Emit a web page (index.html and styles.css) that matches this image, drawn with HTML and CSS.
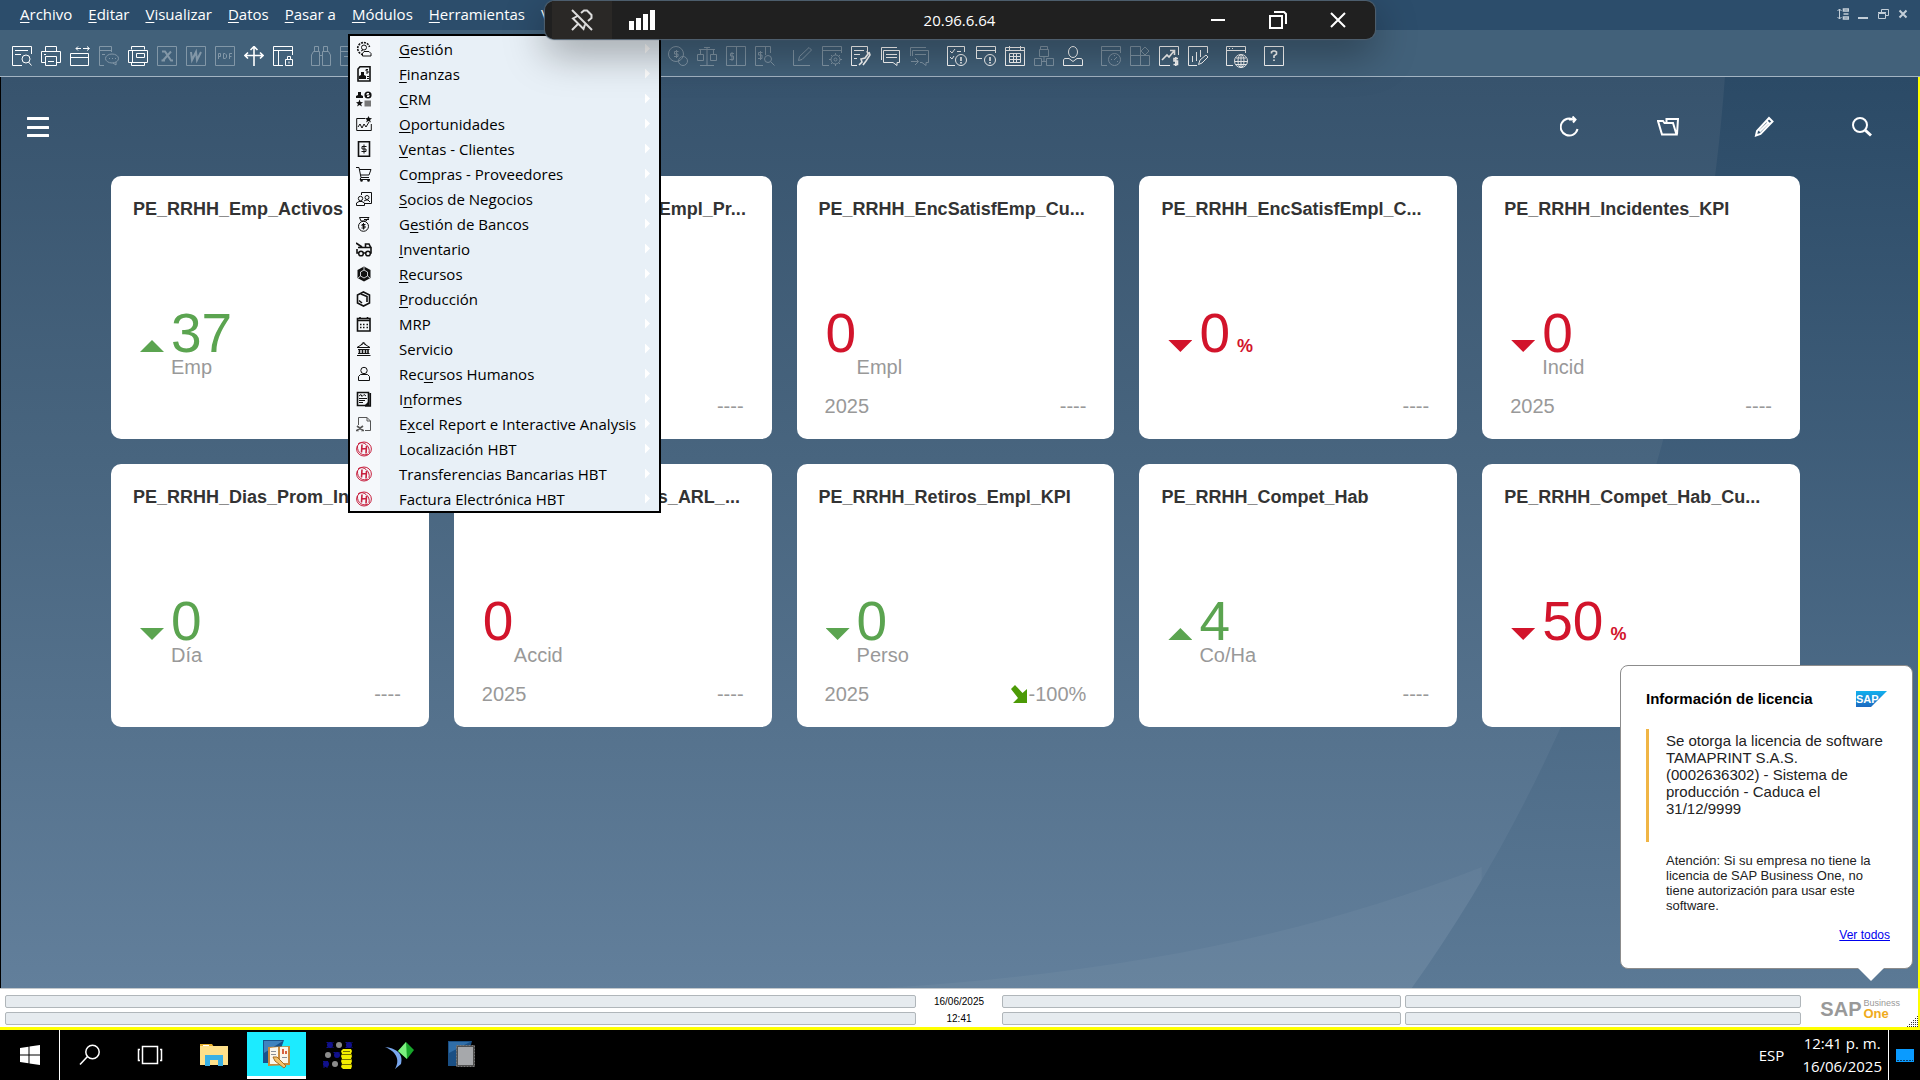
FILE: index.html
```html
<!DOCTYPE html>
<html lang="es">
<head>
<meta charset="utf-8">
<title>SAP Business One</title>
<link rel="stylesheet" href="styles.css">
</head>
<body>
<svg class="sprite" aria-hidden="true">
  <defs>
    <symbol id="t-preview" viewBox="0 0 20 20"><path d="M10 19.500H.5V.5H19.500V8M3 4.500H16M3 8.500H9"/><circle cx="14" cy="13" r="4"/><path d="M16.500 16 19.500 19.500"/></symbol>
    <symbol id="t-print" viewBox="0 0 20 20"><path d="M4.500 5.500V.5H15.500V5.500M4.500 16.500H.5V5.500H19.500V16.500H15.500M4.500 10.500H15.500V19.500H4.500ZM3 8.500H5M7 15.500H13"/></symbol>
    <symbol id="t-swap" viewBox="0 0 20 20"><path d="M.5 7.500H18.500V19.500H.5ZM1 11.500H18M6 2.500H11M13 2.500H19M8 .5 6 2.500 8 4.500M17 .5 19.500 2.500 17 4.500"/></symbol>
    <symbol id="t-msg" viewBox="0 0 20 20"><path d="M5 19.500H.5V.5H12.500V6M1 4.500H12M3 8.500H6"/><ellipse cx="13" cy="12.500" rx="6.500" ry="4.500"/><path d="M14 17 17 19V16M10 12.500H11M13 12.500H14M16 12.500H17"/></symbol>
    <symbol id="t-fax" viewBox="0 0 20 20"><path d="M3.500 3.500V.5H16.500V3.500M.5 4.500H19.500V16.500H.5ZM3.500 16V19.500H16.500V17M4.500 5V16M8.500 7.500H16.500V11.500H8.500Z"/></symbol>
    <symbol id="t-x" viewBox="0 0 20 20"><path d="M.5.5H19.500V19.500H.5Z"/><path class="thick" d="M5 5.500H8L14 14.500H16M14 5.500 6 14.500M4.500 14.500H8"/></symbol>
    <symbol id="t-w" viewBox="0 0 20 20"><path d="M.5.5H19.500V19.500H.5Z"/><path class="thick" d="M5 6 6 14 10 6 11 14 15 6"/></symbol>
    <symbol id="t-pdf" viewBox="0 0 20 20"><path d="M.5.5H19.500V19.500H.5Z"/><path d="M3.500 13V7.500H5.500V10.500H3.500M8.500 7.500H10L11.500 9V11.500L10 12.500H8.500ZM14.500 13V7.500H17M14.500 10.500H16.500"/></symbol>
    <symbol id="t-move" viewBox="0 0 20 20"><path class="mid" d="M10 1V20M1 9.500H19M6.500 4 10 .5 13.500 4M4 6.500 1 9.500 4 12.500M16 6.500 19 9.500 16 12.500"/></symbol>
    <symbol id="t-lock" viewBox="0 0 20 20"><path d="M10 19.500H.5V.5H19.500V9M1 4.500H19M5.500 5V19M12.500 13.500H19.500V19.500H12.500ZM14.500 13V10.500H17.500V13M16 15.500V17.500"/></symbol>
    <symbol id="t-find" viewBox="0 0 20 20"><path d="M3.500 5V.5H7.500V5M12.500 5V.5H16.500V5M2.500 5.500H8.500V19.500H.5V9ZM11.500 5.500H17.500L19.500 9V19.500H11.500ZM8.500 9.500H11.500"/></symbol>
    <symbol id="t-add" viewBox="0 0 20 20"><path d="M.5.5H19.500V19.500H.5ZM1 5.500H19M4 10.500H16M10 8V17"/></symbol>
    <symbol id="t-coins" viewBox="0 0 20 20"><circle cx="8" cy="8" r="7.500"/><path d="M10.500 5.500H6.500V8H10V10.500H6M8.500 4V12"/><circle cx="15" cy="15" r="4.500"/></symbol>
    <symbol id="t-scale" viewBox="0 0 20 20"><path d="M10 1V19M2 3.500H18M3 19.500H17M7 1.500H13M3.500 4V8M16.500 4V8M.5 8.500H6.500V14.500H.5ZM13.500 8.500H19.500V14.500H13.500Z"/></symbol>
    <symbol id="t-split" viewBox="0 0 20 20"><path d="M.5.5H19.500V19.500H.5ZM10.500 1V19M8 7.500H4.500V10H7.500V13.500H3.500M6 6V15"/></symbol>
    <symbol id="t-paysearch" viewBox="0 0 20 20"><path d="M8 19.500H.5V.5H15.500V7M10.500 1V9M7.500 6.500H3.500V9H7V12.500H3M5.500 5V14"/><circle cx="13" cy="13" r="3.500"/><path d="M16 16 19.500 19.500"/></symbol>
    <symbol id="t-edit" viewBox="0 0 20 20"><path d="M.5 4V19.500H17M5.500 14.500 6.500 10.500 16 1.500 18.500 4 9 13.500Z"/></symbol>
    <symbol id="t-gear" viewBox="0 0 20 20"><path d="M7 19.500H.5V.5H19.500V7M1 4.500H19"/><circle cx="13.500" cy="13.500" r="4.500"/><circle cx="13.500" cy="13.500" r="1.500"/><path d="M13.500 7V9M13.500 18V20M7 13.500H9M18 13.500H20M9 9 10.500 10.500M16.500 16.500 18 18M18 9 16.500 10.500M10.500 16.500 9 18"/></symbol>
    <symbol id="t-tool" viewBox="0 0 20 20"><path d="M6 19.500H.5V.5H16.500V5M3 4.500H13M3 8.500H9M3 12.500H6"/><path class="mid" d="M8 19 11 16 10 13 14 12 17 8 16 5M12 19 15 15 19 9 18 6"/></symbol>
    <symbol id="t-chat" viewBox="0 0 20 20"><path d="M1.500 14V1.500H17M3.500 4.500H19.500V16.500H17V19.500L13 16.500H3.500ZM6 8.500H17M6 11.500H17"/></symbol>
    <symbol id="t-reply" viewBox="0 0 20 20"><path d="M1.500 10V1.500H17M3.500 10V4.500H19.500V16.500H17V19.500L13 16.500H11M6 8.500H17M2 15.500H9M6 12 9.500 15.500 6 19"/></symbol>
    <symbol id="t-check" viewBox="0 0 20 20"><path d="M8 19.500H.5V.5H17.500V6M3 5 5 7 8 3M3 11 5 13 7 10M10 5.500H14"/><circle cx="14" cy="14" r="5.500"/><path class="mid" d="M14 11V15M14 16V17.500"/></symbol>
    <symbol id="t-alert" viewBox="0 0 20 20"><path d="M6 12.500H.5V.5H19.500V7M1 4.500H19"/><circle cx="14" cy="14" r="5.500"/><path class="mid" d="M14 11V15M14 16V17.500"/></symbol>
    <symbol id="t-cal" viewBox="0 0 20 20"><path d="M.5 1.500H19.500V19.500H.5ZM4.500 0V4M15.500 0V4M1 4.500H19M4.500 7.500H15.500V16.500H4.500ZM8.500 7V17M11.500 7V17M5 10.500H15M5 13.500H15"/></symbol>
    <symbol id="t-org" viewBox="0 0 20 20"><path d="M5.500 3.500H14.500V10.500H5.500ZM6.500 3V.5H13.500V3M10 11V15M.5 12.500H7.500V19.500H.5ZM12.500 12.500H19.500V19.500H12.500ZM8 15.500H12"/></symbol>
    <symbol id="t-user" viewBox="0 0 20 20"><ellipse cx="10" cy="6" rx="4.500" ry="5.500"/><path d="M6 12.500H1.500L.5 14V19.500H19.500V14L18.500 12.500H14L10 15.500Z"/></symbol>
    <symbol id="t-time" viewBox="0 0 20 20"><path d="M6 19.500H.5V.5H19.500V7M1 4.500H19"/><circle cx="13.500" cy="13.500" r="6"/><path d="M13 14 16 11M10 13.500H11M16 15.500H17M13.500 9V10"/></symbol>
    <symbol id="t-widgets" viewBox="0 0 20 20"><path d="M.5.5H10.500V19.500H.5ZM1 9.500H19.500V19.500H10M15 1 19 5 15 9 11 5Z"/></symbol>
    <symbol id="t-trend" viewBox="0 0 20 20"><path d="M11 19.500H.5V.5H19.500V9"/><path class="mid" d="M3 14 8 9 10 11 15 5M11 4.500H15.500V9M19 12.500H15V15H18.500V18.500H14.500M16.800 11V20"/></symbol>
    <symbol id="t-chart" viewBox="0 0 20 20"><path d="M9 19.500H.5V.5H19.500V7M4.500 16V10M8.500 15V6M12.500 11V4M10.500 18.500 12 14 18 9 20 11 14 17Z"/></symbol>
    <symbol id="t-web" viewBox="0 0 22 22"><path d="M7 19.500H.5V.5H19.500V7M1 4.500H19M3 2.500H4M6 2.500H7"/><circle cx="15" cy="15" r="6.500"/><ellipse cx="15" cy="15" rx="3" ry="6.500"/><path d="M9 15.500H21M10 12H20M10 18.500H20M15 9V21"/></symbol>
    <symbol id="t-help" viewBox="0 0 20 20"><path d="M.5.5H19.500V19.500H.5Z"/><path class="mid" d="M7.500 7.500V6L9 5H11L12.500 6V8L10 10V12M10 13.500V15"/></symbol>

    <symbol id="m-gestion" viewBox="0 0 16 16"><path class="mid" stroke-dasharray="2 1" d="M7 13.500A6 6 0 1 1 13.500 6"/><circle cx="8" cy="6.500" r="2.500"/><path d="M6.500 15V12.500L8 10.500H13L15 12.500V15ZM5 10 7 9"/></symbol>
    <symbol id="m-finanzas" viewBox="0 0 16 16"><path class="mid" d="M4 .8H14V15H2V3Z"/><path class="fill" d="M3 13V10L5 9V6H8V9L10 10V13Z"/><path d="M12 3.500H10V5H12V7H10M11 10.500H13M11 12.500H13"/></symbol>
    <symbol id="m-crm" viewBox="0 0 16 16"><path class="fill" d="M0 7V5L2 4V1H5V4L7 5V7ZM3.500 8.500 4.500 11 7 11.200 5 13 6 15.500 3.500 14 1 15.500 2 13 0 11.200 2.500 11Z"/><path fill="#777" stroke="none" d="M8.500 9.500H15V15.500H8.500Z"/><circle class="fill" cx="12" cy="4" r="3.600"/><path class="light" d="M13 2.500H11V4H13V5.500H11"/></symbol>
    <symbol id="m-opor" viewBox="0 0 16 16"><path d="M9 2.500H.7V14.500H15.300V8M2 11 4 8 6 12 8 8 10 11 13 6"/><path class="fill" d="M12.500 0 13.500 2 16 2.200 14 4 15 6.500 12.500 5 10 6.500 11 4 9 2.200 11.500 2Z"/></symbol>
    <symbol id="m-ventas" viewBox="0 0 16 16"><path class="mid" d="M2.500.8H13.500V15.200H2.500Z"/><path d="M10.500 5.500H6V8H10V10.500H5.500M8 3.500V12.500"/></symbol>
    <symbol id="m-compras" viewBox="0 0 16 16"><path d="M0 1.500H3L5 11.500H13M3.500 3.500H15L13 9H4.500M5 11.500 4 13.500H14"/><circle class="fill" cx="5.500" cy="14.500" r="1.300"/><circle class="fill" cx="12.500" cy="14.500" r="1.300"/></symbol>
    <symbol id="m-socios" viewBox="0 0 16 16"><path d="M5.500 4V1.500H15.500V12.500H9"/><circle cx="4.500" cy="7.500" r="2.200"/><circle cx="11" cy="6.500" r="2"/><path d="M.5 14.500V12L3 10.500H6L8.500 12V14.500ZM8 10 10 9H12L14 11"/></symbol>
    <symbol id="m-bancos" viewBox="0 0 16 16"><path d="M5 5 3.500 1.500H13L10 5Z"/><circle cx="7.500" cy="10.300" r="5"/><path d="M9.500 8.500H6V10H9V12H5.500M7.500 7V13.500M8 3.500H13"/></symbol>
    <symbol id="m-invent" viewBox="0 0 16 16"><path class="mid" d="M0 2 6 6M2 6.500H15V12H1V8M9.500 6V3H13L15 7"/><circle class="knob" cx="5" cy="12.500" r="2.300"/><circle class="knob" cx="12" cy="12.500" r="2.300"/></symbol>
    <symbol id="m-recursos" viewBox="0 0 16 16"><path class="fill" d="M8 .5 14.500 4V12L8 15.500 1.500 12V4Z"/><path stroke="#f5f8fb" stroke-width=".8" d="M8 4 11.500 6V10L8 12 4.500 10V6ZM8 1V4M2 12 4.500 10M14 12 11.500 10"/></symbol>
    <symbol id="m-prod" viewBox="0 0 16 16"><path class="mid" d="M7.500 1 13.500 4V12L7.500 15 1.500 12V4ZM5 3 11 5.500V11M3 9.500 6 12"/></symbol>
    <symbol id="m-mrp" viewBox="0 0 16 16"><path class="mid" d="M1.500 2.500H14V15H1.500ZM1.500 4.500H14M4 1V3M11.500 1V3"/><path class="mid" d="M4 8.500H5.500M7 8.500H8.500M10.500 8.500H12M4 11.500H5.500M7 11.500H8.500M10.500 11.500H12"/></symbol>
    <symbol id="m-serv" viewBox="0 0 16 16"><path d="M1 6.500 7.500 2.500 14 6.500ZM5 4 7.500 1 10 4M2 8.500H13.500M1 14.500H14.500M2 12.500H13.500"/><path class="mid" d="M3.500 9V12M6.500 9V12M9.500 9V12M12 9V12"/></symbol>
    <symbol id="m-rrhh" viewBox="0 0 16 16"><circle cx="8" cy="4.500" r="3.200"/><path d="M2.500 14.500V10.500L4.500 8.500H11.500L13.500 10.500V14.500Z"/></symbol>
    <symbol id="m-inf" viewBox="0 0 16 16"><path class="mid" d="M1.500 1.500H12.500V14.500H1.500ZM14.300 2V15H9"/><path d="M3 5 5 3.500 6 5.500 8 3.500 10 5M3 7.500H11M3 9.500H9M3 11.500H7"/><path class="fill" d="M13 10V15H8Z"/></symbol>
    <symbol id="m-excel" viewBox="0 0 16 16"><path d="M2.500 9V1.500H11L14.500 5V14.500H9M11 1.500V5H14.500"/><path class="mid" d="M1 10 7 14.500M7 10 1 14.500M0 14.500H3M5 14.500H8"/></symbol>
    <symbol id="m-hbt" viewBox="0 0 16 16"><ellipse cx="8" cy="8" rx="7.400" ry="7"/><path d="M2 3C5-1 15 4 13 12M1.500 5C1 12 7 15.500 12 13"/><path class="mid" d="M6 3.500 5.500 11.500M5.500 8 10.500 7.500M10.500 5 10 12.500"/></symbol>
  </defs>
</svg>

<div class="desktop">
  <header class="menubar">
    <nav class="menus">
      <button><u>A</u>rchivo</button><button><u>E</u>ditar</button><button><u>V</u>isualizar</button><button><u>D</u>atos</button><button><u>P</u>asar a</button><button><u>M</u>ódulos</button><button><u>H</u>erramientas</button><button>Ventana</button>
    </nav>
    <div class="winctl">
      <button aria-label="Ordenar"><svg width="12" height="12" viewBox="0 0 12 12"><path d="M2.500 1V11M.5 3 2.500 1 4.500 3M.5 9 2.500 11 4.500 9"/><path class="mid" d="M6.500 1H11.500V3H6.500ZM6.500 6H11.500M6.500 9H11.500V11H6.500Z"/></svg></button>
      <button aria-label="Minimizar"><svg width="12" height="12" viewBox="0 0 12 12"><path class="thick" d="M1 10H11"/></svg></button>
      <button aria-label="Restaurar"><svg width="12" height="12" viewBox="0 0 12 12"><path d="M1.500 5.500H8.500V10.500H1.500ZM4.500 4V1.500H11.500V7.500H9M1 4.500H9"/></svg></button>
      <button aria-label="Cerrar"><svg width="12" height="12" viewBox="0 0 12 12"><path class="thick" d="M2.500 2.500 9.500 9.500M9.500 2.500 2.500 9.500"/></svg></button>
    </div>
  </header>

  <div class="toolbar" role="toolbar">
    <div class="group">
      <button aria-label="Vista previa"><svg><use href="#t-preview"/></svg></button>
      <button aria-label="Imprimir"><svg><use href="#t-print"/></svg></button>
      <button aria-label="Intercambiar"><svg><use href="#t-swap"/></svg></button>
      <button disabled aria-label="SMS"><svg><use href="#t-msg"/></svg></button>
      <button aria-label="Fax"><svg><use href="#t-fax"/></svg></button>
      <button disabled aria-label="Exportar a Excel"><svg><use href="#t-x"/></svg></button>
      <button disabled aria-label="Exportar a Word"><svg><use href="#t-w"/></svg></button>
      <button disabled aria-label="Exportar a PDF"><svg><use href="#t-pdf"/></svg></button>
      <button aria-label="Arrastrar y relacionar"><svg><use href="#t-move"/></svg></button>
      <button aria-label="Bloquear pantalla"><svg><use href="#t-lock"/></svg></button>
    </div>
    <div class="group">
      <button disabled aria-label="Buscar"><svg><use href="#t-find"/></svg></button>
      <button disabled aria-label="Crear"><svg><use href="#t-add"/></svg></button>
      <button disabled></button><button disabled></button><button disabled></button><button disabled></button>
    </div>
    <div class="group">
      <button disabled></button><button disabled></button><button disabled></button><button disabled></button><button disabled></button><button disabled></button>
      <button disabled aria-label="Medios de pago"><svg><use href="#t-coins"/></svg></button>
      <button disabled aria-label="Beneficio bruto"><svg><use href="#t-scale"/></svg></button>
      <button disabled aria-label="Volumen"><svg><use href="#t-split"/></svg></button>
      <button disabled aria-label="Resumen"><svg><use href="#t-paysearch"/></svg></button>
    </div>
    <div class="group">
      <button disabled aria-label="Modificar"><svg><use href="#t-edit"/></svg></button>
      <button disabled aria-label="Parametrizar"><svg><use href="#t-gear"/></svg></button>
      <button aria-label="Herramientas"><svg><use href="#t-tool"/></svg></button>
      <button aria-label="Mensajes"><svg><use href="#t-chat"/></svg></button>
      <button disabled aria-label="Responder"><svg><use href="#t-reply"/></svg></button>
    </div>
    <div class="group">
      <button aria-label="Tareas"><svg><use href="#t-check"/></svg></button>
      <button aria-label="Alertas"><svg><use href="#t-alert"/></svg></button>
      <button aria-label="Calendario"><svg><use href="#t-cal"/></svg></button>
      <button disabled aria-label="Organigrama"><svg><use href="#t-org"/></svg></button>
      <button aria-label="Usuario"><svg><use href="#t-user"/></svg></button>
    </div>
    <div class="group">
      <button disabled aria-label="Programar"><svg><use href="#t-time"/></svg></button>
      <button disabled aria-label="Widgets"><svg><use href="#t-widgets"/></svg></button>
      <button aria-label="Tendencia"><svg><use href="#t-trend"/></svg></button>
      <button aria-label="Gráfico"><svg><use href="#t-chart"/></svg></button>
    </div>
    <div class="group"><button aria-label="Navegador"><svg class="web"><use href="#t-web"/></svg></button></div>
    <div class="group"><button aria-label="Ayuda"><svg><use href="#t-help"/></svg></button></div>
  </div>

  <main class="workspace">
    <svg class="backdrop" viewBox="0 0 1916 911" preserveAspectRatio="none" aria-hidden="true">
      <defs><linearGradient id="dark" x1="0" y1="0" x2="0" y2="1"><stop offset="0" stop-color="#2b4a66"/><stop offset="1" stop-color="#5b7995"/></linearGradient></defs>
      <path d="M880 911C1120 896 1300 860 1480 790V911Z" fill="#fff" fill-opacity=".04"/>
      <path d="M1723 0C1700 320 1590 660 1410 911H1916V0Z" fill="url(#dark)"/>
    </svg>
    <div class="dashbar">
      <button class="burger" aria-label="Menú"><svg width="22" height="22" viewBox="0 0 22 22"><path d="M1 2.500H21M1 11.500H21M1 19.500H21"/></svg></button>
      <div class="dashtools">
        <button aria-label="Actualizar"><svg width="22" height="22" viewBox="0 0 22 22"><path d="M14 4A8.500 8.500 0 1 0 17.500 13M9 3.500H15M12.500 .5 15.500 3.500 13 6.500"/></svg></button>
        <button aria-label="Abrir"><svg width="22" height="22" viewBox="0 0 22 22"><path d="M1 5H6L7.500 7H16L19.500 18.500H5ZM9.500 6V3H21L20 18.500"/></svg></button>
        <button aria-label="Editar"><svg width="22" height="22" viewBox="0 0 22 22"><path d="M2 19.500 3 15 15 2 18.500 5.500 6.500 18ZM12.500 5 16 8.500M5.500 15.500 14 7"/></svg></button>
        <button aria-label="Buscar"><svg width="22" height="22" viewBox="0 0 22 22"><circle cx="9" cy="9" r="7"/><path class="heavy" d="M14 14 20 19.500"/></svg></button>
      </div>
    </div>
    <section class="cards">
      <article class="card good"><h2>PE_RRHH_Emp_Activos</h2><div class="kpi"><i class="up"></i><b>37</b></div><p class="unit">Emp</p></article>
      <article class="card"><h2>PE_RRHH_Rotacion_Empl_Pr...</h2><div class="kpi"></div><p class="unit"></p><footer><span></span><span>----</span></footer></article>
      <article class="card bad"><h2>PE_RRHH_EncSatisfEmp_Cu...</h2><div class="kpi"><b>0</b></div><p class="unit">Empl</p><footer><span>2025</span><span>----</span></footer></article>
      <article class="card bad"><h2>PE_RRHH_EncSatisfEmpl_C...</h2><div class="kpi"><i class="down"></i><b>0</b><em>%</em></div><p class="unit"></p><footer><span></span><span>----</span></footer></article>
      <article class="card bad"><h2>PE_RRHH_Incidentes_KPI</h2><div class="kpi"><i class="down"></i><b>0</b></div><p class="unit">Incid</p><footer><span>2025</span><span>----</span></footer></article>
      <article class="card good"><h2>PE_RRHH_Dias_Prom_In...</h2><div class="kpi"><i class="down"></i><b>0</b></div><p class="unit">Día</p><footer><span></span><span>----</span></footer></article>
      <article class="card bad"><h2>PE_RRHH_Accidentes_ARL_...</h2><div class="kpi"><b>0</b></div><p class="unit">Accid</p><footer><span>2025</span><span>----</span></footer></article>
      <article class="card good"><h2>PE_RRHH_Retiros_Empl_KPI</h2><div class="kpi"><i class="down"></i><b>0</b></div><p class="unit">Perso</p><footer><span>2025</span><span class="trend"><svg width="20" height="20" viewBox="0 0 20 20"><path d="M2 5 6 1 13.500 9 18 5V19H4L9 14Z"/></svg>-100%</span></footer></article>
      <article class="card good"><h2>PE_RRHH_Compet_Hab</h2><div class="kpi"><i class="up"></i><b>4</b></div><p class="unit">Co/Ha</p><footer><span></span><span>----</span></footer></article>
      <article class="card bad"><h2>PE_RRHH_Compet_Hab_Cu...</h2><div class="kpi"><i class="down"></i><b>50</b><em>%</em></div><p class="unit"></p></article>
    </section>

    <aside class="license">
      <header><h3>Información de licencia</h3>
        <svg width="31" height="16" viewBox="0 0 31 16"><defs><linearGradient id="sap" x1="0" y1="0" x2="0" y2="1"><stop offset="0" stop-color="#12b0ee"/><stop offset="1" stop-color="#1c69c0"/></linearGradient></defs><path d="M0 0H31L15 16H0Z" fill="url(#sap)"/><text class="saptext" x="0" y="12">SAP</text></svg>
      </header>
      <p class="grant">Se otorga la licencia de software TAMAPRINT S.A.S. (0002636302) - Sistema de producción - Caduca el 31/12/9999</p>
      <p class="notice">Atención: Si su empresa no tiene la licencia de SAP Business One, no tiene autorización para usar este software.</p>
      <a href="#">Ver todos</a>
    </aside>
  </main>

  <footer class="status">
    <div></div><time>16/06/2025</time><div></div><div></div>
    <div></div><time>12:41</time><div></div><div></div>
    <div class="brand"><strong>SAP</strong><span>Business<b>One</b></span></div>
    <svg class="grip" width="11" height="11" viewBox="0 0 11 11"><path stroke-dasharray="1 1" d="M0 10.500H11M2 8.500H11M4 6.500H11M6 4.500H11M8 2.500H11M10 .5H11"/></svg>
  </footer>

  <footer class="taskbar">
    <button class="start" aria-label="Inicio"><svg width="20" height="20" viewBox="0 0 20 20"><path d="M0 3 8.500 1.800V9.500H0ZM9.500 1.600 20 0V9.500H9.500ZM0 10.500H8.500V18.200L0 17ZM9.500 10.500H20V20L9.500 18.400Z"/></svg></button>
    <button class="line" aria-label="Buscar"><svg width="22" height="22" viewBox="0 0 22 22"><circle cx="13.500" cy="8" r="6.700"/><path d="M8.500 12.500 1 20.500"/></svg></button>
    <button class="line" aria-label="Vista de tareas"><svg width="26" height="20" viewBox="0 0 26 20"><path d="M5.500 1.500H20.500V18.500H5.500ZM3 4.500H1.500V15.500H3M23 4.500H24.500V15.500H23"/></svg></button>
    <button class="files" aria-label="Explorador de archivos"><svg width="28" height="24" viewBox="0 0 28 24"><path fill="#e8b02c" d="M0 1H12L14 4H0Z"/><path fill="#fee08a" d="M0 3H28V22H0Z"/><path fill="#fff" d="M3 2H9V3H3Z"/><path fill="#39b0e5" d="M5 23V12H23V23H18V17H10V23Z"/></svg></button>
    <button class="active" aria-label="SAP Business One"><svg width="30" height="30" viewBox="0 0 30 30"><path fill="#17528c" d="M1 1H22L14 24H1Z"/><path fill="#3f83bf" d="M2 2H21L2 14Z"/><path fill="#c98a3c" d="M6 8 28 7V26L6 27Z"/><path fill="#fbf6ea" d="M8 9 16 8V25H8ZM18 8H26V24H18Z"/><path fill="#d8623f" d="M20 10H22V15H20ZM23 12H25V15H23Z"/><path fill="#8a8f96" d="M9 12H14V13H9ZM9 15H14V16H9ZM20 18H25V19H20Z"/><path fill="#f4c36b" stroke="#a46c22" d="M11 18 15 18 24 27 22 29 13 22Z"/></svg></button>
    <button class="wide" aria-label="Base de datos"><svg width="30" height="28" viewBox="0 0 30 28"><g fill="#10108c"><circle cx="7" cy="4" r="3"/><circle cx="26" cy="4" r="3"/><circle cx="14" cy="14" r="3"/><circle cx="3" cy="23" r="3"/></g><g fill="#8c8c8c"><circle cx="16" cy="4" r="3"/><circle cx="5" cy="14" r="3"/><circle cx="12" cy="23" r="3"/></g><path stroke="#10108c" stroke-dasharray="2 1" d="M3.500 1.500H10.500M3.500 6.500H10.500M22.500 1.500H29.500M22.500 6.500H29.500M10.500 11.500H17M0 20.500H6M0 26H6"/><path fill="#f5ee00" d="M18 10 20 8H28L29 10 28 13 29 15 28 18 29 20 28 23 29 25 28 28H20L18 26 19 23 18 20 19 18 18 15 19 13Z"/><path stroke="#777000" d="M20 10.500H27M19 13.500H29M19 18.500H29M19 23.500H29"/></svg></button>
    <button class="wide" aria-label="Conector"><svg width="30" height="28" viewBox="0 0 30 28"><path fill="#79a7ee" d="M0 6C10 7 19 12 16 23L10 28C16 18 10 10 0 6Z"/><path fill="#17a52a" d="M21 1 29 9 22 18 13 10Z"/><path fill="#7bf07f" d="M21 1 22 18 13 10Z"/></svg></button>
    <button class="wide" aria-label="Servicios"><svg width="28" height="28" viewBox="0 0 28 28"><path fill="#1a4f84" d="M0 0H24L17 25H0Z"/><path fill="#3f83bf" fill-opacity=".6" d="M1 1H22L1 12Z"/><path fill="#4f4f4f" stroke="#777" stroke-dasharray="2 1" d="M8.500 4.500H26.500V25.500H8.500Z"/><path fill="#a6a8ab" d="M10 6H25V24H10Z"/></svg></button>
    <div class="tray"><span>ESP</span><time>12:41 p. m.<br>16/06/2025</time><button aria-label="Mostrar escritorio"><svg width="18" height="13" viewBox="0 0 18 13"><path fill="#0a9bff" d="M0 0H18V13H0Z"/><path stroke="#0b3d66" stroke-dasharray="2 1" d="M1 11.500H17"/></svg></button></div>
  </footer>

  <ul class="modules">
    <li><svg><use href="#m-gestion"/></svg><a href="#"><u>G</u>estión</a></li>
    <li><svg><use href="#m-finanzas"/></svg><a href="#"><u>F</u>inanzas</a></li>
    <li><svg><use href="#m-crm"/></svg><a href="#"><u>C</u>RM</a></li>
    <li><svg><use href="#m-opor"/></svg><a href="#"><u>O</u>portunidades</a></li>
    <li><svg><use href="#m-ventas"/></svg><a href="#"><u>V</u>entas - Clientes</a></li>
    <li><svg><use href="#m-compras"/></svg><a href="#">Co<u>m</u>pras - Proveedores</a></li>
    <li><svg><use href="#m-socios"/></svg><a href="#"><u>S</u>ocios de Negocios</a></li>
    <li><svg><use href="#m-bancos"/></svg><a href="#">G<u>e</u>stión de Bancos</a></li>
    <li><svg><use href="#m-invent"/></svg><a href="#"><u>I</u>nventario</a></li>
    <li><svg><use href="#m-recursos"/></svg><a href="#"><u>R</u>ecursos</a></li>
    <li><svg><use href="#m-prod"/></svg><a href="#"><u>P</u>roducción</a></li>
    <li><svg><use href="#m-mrp"/></svg><a href="#">MRP</a></li>
    <li><svg><use href="#m-serv"/></svg><a href="#">Servicio</a></li>
    <li><svg><use href="#m-rrhh"/></svg><a href="#">Rec<u>u</u>rsos Humanos</a></li>
    <li><svg><use href="#m-inf"/></svg><a href="#">I<u>n</u>formes</a></li>
    <li><svg class="gray"><use href="#m-excel"/></svg><a href="#">E<u>x</u>cel Report e Interactive Analysis</a></li>
    <li><svg class="red"><use href="#m-hbt"/></svg><a href="#">Localización HBT</a></li>
    <li><svg class="red"><use href="#m-hbt"/></svg><a href="#">Transferencias Bancarias HBT</a></li>
    <li><svg class="red"><use href="#m-hbt"/></svg><a href="#">Factura Electrónica HBT</a></li>
  </ul>

  <div class="remote">
    <button class="pin" aria-label="Desanclar"><svg width="22" height="22" viewBox="0 0 22 22"><path d="M1 1 21 21M10 4 13 1.500H16L20.500 6V9L17 12M6.500 7 2 9.500 12.500 20 14 15.500M7 15 1 21"/></svg></button>
    <svg class="signal" width="26" height="20" viewBox="0 0 26 20"><path d="M0 11H5V20H0ZM7 8H12V20H7ZM14 4H19V20H14ZM21 0H26V20H21Z"/></svg>
    <span class="host">20.96.6.64</span>
    <div class="rctl">
      <button aria-label="Minimizar"><svg width="18" height="18" viewBox="0 0 18 18"><path d="M2 9H16"/></svg></button>
      <button aria-label="Restaurar"><svg width="18" height="18" viewBox="0 0 18 18"><path d="M1 5H13V17H1ZM5 1H15L17 3V13"/></svg></button>
      <button aria-label="Cerrar"><svg width="18" height="18" viewBox="0 0 18 18"><path d="M2 2 16 16M16 2 2 16"/></svg></button>
    </div>
  </div>
</div>
</body>
</html>
```
FILE: styles.css
```css
* { box-sizing: border-box; }
body { margin: 0; background: #000; font-family: "Liberation Sans", Arial, sans-serif; }
h2, h3, p, ul { margin: 0; padding: 0; }
button { margin: 0; padding: 0; border: 0; background: none; color: inherit; font: inherit; }
svg { display: block; fill: none; stroke: currentColor; }
.sprite { position: absolute; width: 0; height: 0; }
.mid { stroke-width: 1.6; }
.thick { stroke-width: 2; }
.fill { fill: currentColor; stroke: none; }
.light { stroke: #fff; fill: none; }
.knob { fill: #f5f8fb; stroke-width: 1.5; }
u { text-decoration: underline; text-decoration-thickness: 1px; text-underline-offset: 2px; }

.desktop { position: relative; display: flex; flex-direction: column; min-height: 100vh; overflow: hidden; }

/* Menu bar */
.menubar { display: flex; justify-content: space-between; align-items: center; height: 30px; padding: 0 11px 2px 20px; background: #2c4d6b; color: #fff; font-family: "Open Sans", "Noto Sans", sans-serif; font-size: 15px; }
.menus { display: flex; gap: 16px; }
.winctl { display: flex; gap: 8px; color: #c3ced8; }

/* Toolbar */
.toolbar { display: flex; gap: 18px; height: 47px; padding: 16px 12px 0; background: #42617a; border-bottom: 1px solid #a3b4c3; color: #fff; }
.group { display: flex; gap: 9px; }
.toolbar button, .toolbar svg { width: 20px; height: 20px; }
.toolbar button:disabled { color: #fff; opacity: .34; }
.toolbar .web { width: 22px; height: 22px; }

/* Workspace */
.workspace { position: relative; flex: 1; border-left: 1px solid #000; border-right: 2px solid #ff0; background: linear-gradient(#37536d, #48657f 42%, #627f9b); }
.backdrop { position: absolute; inset: 0; width: 100%; height: 100%; stroke: none; }
.dashbar { position: relative; display: flex; justify-content: space-between; align-items: center; height: 99px; padding: 0 45px 0 26px; color: #fff; }
.dashbar svg { stroke-width: 2; }
.dashbar .burger svg { stroke-width: 3; stroke-linecap: round; }
.dashtools { display: flex; gap: 75px; }
.heavy { stroke-width: 3; }
.cards { position: relative; display: grid; grid-template-columns: repeat(5, minmax(0, 1fr)); gap: 25px; padding: 0 118px 0 110px; }
.card { display: flex; flex-direction: column; height: 263px; padding: 22px 28px 21px 22px; border-radius: 10px; background: #fff; color: #999; font-size: 20px; line-height: 24px; }
.card h2 { color: #333; font-size: 18px; line-height: 22px; white-space: nowrap; }
.kpi { display: flex; align-items: baseline; gap: 7px; height: 60px; margin-top: 83px; padding-left: 7px; line-height: 60px; }
.kpi b { font-size: 55px; font-weight: normal; }
.kpi em { font-size: 18px; font-style: normal; font-weight: bold; }
.good .kpi { color: #5ba450; }
.bad .kpi { color: #d2142b; }
.up, .down { width: 24px; height: 12px; background: currentColor; }
.up { clip-path: polygon(50% 0, 100% 100%, 0 100%); }
.down { clip-path: polygon(0 0, 100% 0, 50% 100%); }
.unit { height: 24px; margin-top: -8px; padding-left: 38px; }
.card footer { display: flex; justify-content: space-between; margin-top: auto; padding-left: 6px; }
.trend { display: flex; align-items: center; }
.trend svg { fill: #4c9a06; stroke: none; }

/* Licence balloon */
.license { position: absolute; right: 5px; bottom: 19px; width: 293px; height: 304px; padding: 24px 22px 0 25px; border: 1px solid #8c8c8c; border-radius: 8px; background: #fff; color: #222; }
.license::after { content: ""; position: absolute; right: 28px; bottom: -13px; width: 26px; height: 13px; background: #fff; clip-path: polygon(0 0, 100% 0, 50% 100%); }
.license header { display: flex; justify-content: space-between; align-items: center; padding-right: 3px; color: #000; }
.license header svg { stroke: none; }
.license h3 { font-size: 15px; line-height: 18px; }
.saptext { fill: #fff; font-size: 11px; font-weight: bold; }
.grant { height: 113px; margin-top: 21px; padding: 3px 0 0 17px; border-left: 3px solid #f0b545; font-size: 15px; line-height: 17px; }
.notice { margin-top: 11px; padding-left: 20px; font-size: 13px; line-height: 15px; }
.license a { display: block; margin-top: 14px; color: #00e; font-size: 12px; line-height: 16px; text-align: right; }

/* Status bar */
.status { position: relative; display: grid; grid-template-columns: 911fr 78fr 399fr 396fr; gap: 4px; height: 39px; padding: 6px 117px 3px 5px; border-top: 1px solid #c3c8cc; border-right: 2px solid #ff0; background: #fff; }
.status > div:not(.brand) { height: 13px; border: 1px solid #b0b6ba; border-radius: 2px; background: #e6ebef; }
.status time { font-size: 10px; line-height: 13px; text-align: center; color: #000; }
.status .brand { position: absolute; right: 18px; top: 10px; display: flex; gap: 2px; color: #999; }
.brand strong { font-size: 20px; line-height: 20px; }
.brand span { font-size: 9px; line-height: 9px; }
.brand b { display: block; color: #f0ab1c; font-size: 13px; line-height: 11px; }
.grip { position: absolute; right: 0; bottom: 0; color: #333; }

/* Taskbar */
.taskbar { display: flex; height: 53px; border-top: 3px solid #ff0; background: #000; color: #fff; font-family: "Open Sans", "Noto Sans", sans-serif; font-size: 15px; }
.taskbar > button { display: grid; place-items: center; width: 60px; }
.taskbar svg { stroke: none; }
.taskbar > .start { border-right: 1px solid #fff; }
.start svg { fill: #fff; }
.line svg { stroke: #fff; stroke-width: 1.5; }
.taskbar > .wide { width: 62px; }
.taskbar > .files { width: 67px; }
.taskbar > .active { width: 59px; margin: 2px 1px 1px 0; border-bottom: 3px solid #fff; background: #1cebff; }
.tray { display: flex; align-items: center; margin-left: auto; }
.tray time { margin: 0 6px 0 18px; line-height: 23px; text-align: center; }
.tray button { display: grid; place-items: center; width: 32px; height: 50px; border-left: 1px solid #fff; }

/* Modules menu */
.modules { position: absolute; left: 348px; top: 34px; width: 313px; border: 2px solid #000; background: linear-gradient(90deg, #f5f8fb 30px, #e8f0f7 30px); list-style: none; font-family: "Open Sans", "Noto Sans", sans-serif; font-size: 15px; }
.modules li { display: flex; align-items: center; height: 25px; padding: 0 9px 0 6px; }
.modules li::after { content: ""; width: 5px; height: 10px; margin-left: auto; background: #fff; clip-path: polygon(0 0, 100% 50%, 0 100%); }
.modules svg { width: 16px; height: 16px; margin-right: 27px; color: #111; }
.modules .gray { color: #555; }
.modules .red { color: #c8213f; }
.modules a { padding-top: 2px; color: #000; line-height: 23px; text-decoration: none; white-space: nowrap; }

/* Remote session bar */
.remote { position: absolute; top: 1px; left: 0; right: 0; display: flex; align-items: center; width: 830px; height: 38px; margin: 0 auto; padding: 0 7px; border-radius: 9px; background: #202020; color: #fff; box-shadow: 0 0 1px 1px #50606e, 0 14px 40px rgba(0, 0, 0, .35); font-family: "Open Sans", "Noto Sans", sans-serif; font-size: 15px; }
.pin { display: grid; place-items: center; width: 60px; height: 38px; background: #2a2826; color: #ddd; }
.pin svg, .rctl svg { stroke-width: 2; }
.signal { margin-left: 17px; fill: #fff; stroke: none; }
.host { flex: 1; padding-left: 76px; text-align: center; }
.rctl { display: flex; }
.rctl button { display: grid; place-items: center; width: 60px; height: 38px; }
```
